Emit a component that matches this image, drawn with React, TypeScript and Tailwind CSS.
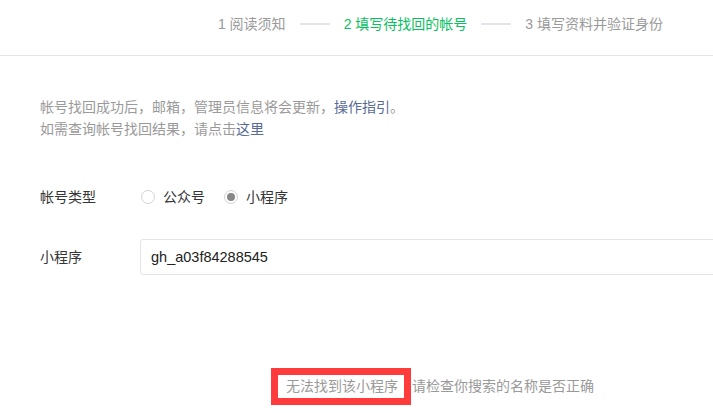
import { useState } from 'react';

const steps = ['1 阅读须知', '2 填写待找回的帐号', '3 填写资料并验证身份'];

export default function App() {
  const [type, setType] = useState('mini');
  const [appId, setAppId] = useState('gh_a03f84288545');

  return (
    <div
      className="w-[713px] h-[413px] overflow-hidden bg-white text-[14px]"
      style={{ fontFamily: '"Liberation Sans", "Noto Sans CJK SC", sans-serif' }}
    >
      <div className="h-[56px] border-b border-[#e5e5e5] flex items-start justify-end pt-[14px] pr-[50px]">
        <div className="flex items-center gap-[14px] leading-[20px]">
          {steps.map((s, i) => (
            <div key={s} className="flex items-center gap-[14px]">
              {i > 0 && <span className="block w-[30px] h-[2px] bg-[#e2e5ea]"></span>}
              <span className={i === 1 ? 'text-[#07c160]' : 'text-[#9a9a9a]'}>{s}</span>
            </div>
          ))}
        </div>
      </div>

      <div className="pl-[40px]">
        <div className="mt-[40px] leading-[22px] text-[#9a9a9a]">
          <p>
            帐号找回成功后，邮箱，管理员信息将会更新，<a className="text-[#576b95] cursor-pointer">操作指引</a>。
          </p>
          <p>
            如需查询帐号找回结果，请点击<a className="text-[#576b95] cursor-pointer">这里</a>
          </p>
        </div>

        <div className="mt-[39px] h-[36px] flex items-center">
          <span className="w-[100px] shrink-0 text-[#353535]">帐号类型</span>
          <label className="flex items-center cursor-pointer ml-[1px]" onClick={() => setType('mp')}>
            <span className="w-[14px] h-[14px] rounded-full border border-[#d4d4d4] flex items-center justify-center">
              {type === 'mp' && <span className="w-[8px] h-[8px] rounded-full bg-[#888]"></span>}
            </span>
            <span className="ml-[8px] text-[#353535]">公众号</span>
          </label>
          <label className="flex items-center cursor-pointer ml-[19px]" onClick={() => setType('mini')}>
            <span className="w-[14px] h-[14px] rounded-full border border-[#d4d4d4] flex items-center justify-center">
              {type === 'mini' && <span className="w-[8px] h-[8px] rounded-full bg-[#888]"></span>}
            </span>
            <span className="ml-[8px] text-[#353535]">小程序</span>
          </label>
        </div>

        <div className="mt-[24px] h-[36px] flex items-center">
          <span className="w-[100px] shrink-0 text-[#353535]">小程序</span>
          <input
            value={appId}
            onChange={(e) => setAppId(e.target.value)}
            className="w-[620px] shrink-0 h-[36px] rounded-[3px] border border-[#e4e4e4] pl-[10px] text-[14.5px] text-[#222] outline-none"
          />
        </div>
      </div>

      <div className="mt-[93px] pl-[271px] flex items-center">
        <span className="h-[37px] border-[7px] border-[#ff3b3b] pl-[8px] pr-[6px] flex items-center text-[#9a9a9a] leading-[23px]">
          无法找到该小程序
        </span>
        <span className="ml-[1px] text-[#9a9a9a]">请检查你搜索的名称是否正确</span>
      </div>
    </div>
  );
}
